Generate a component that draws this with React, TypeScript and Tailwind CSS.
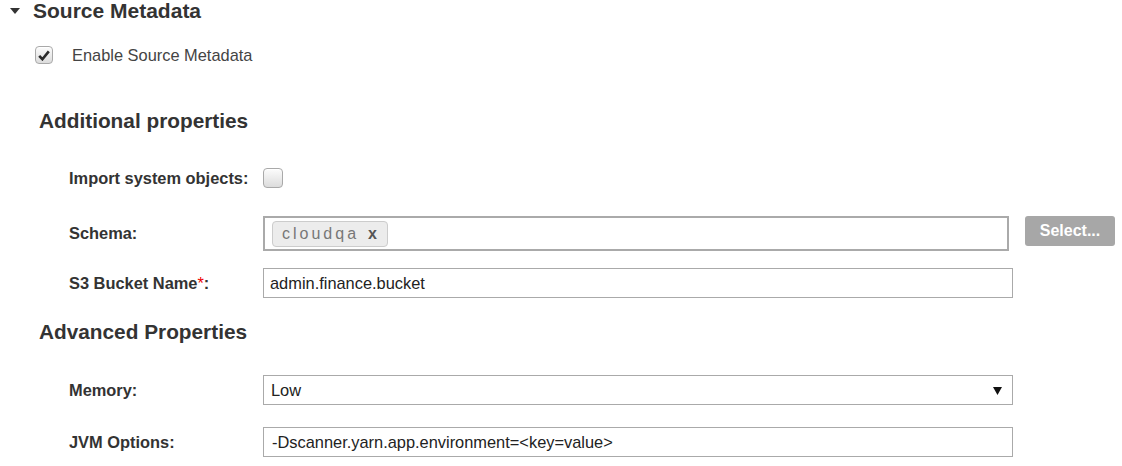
import React from "react";

function CheckBox({ checked, size = 18 }: { checked?: boolean; size?: number }) {
  return (
    <div
      className="rounded-[4px] border border-[#a9a9a9] bg-gradient-to-b from-[#fcfcfc] to-[#dcdcdc] flex items-center justify-center shadow-[inset_0_1px_0_#fff]"
      style={{ width: size, height: size }}
    >
      {checked && (
        <svg width="12" height="11" viewBox="0 0 12 11">
          <path d="M1.2 5.8 L4.4 9.2 L10.8 1.4" fill="none" stroke="#2b2b2b" strokeWidth="2.6" strokeLinejoin="miter" />
        </svg>
      )}
    </div>
  );
}

function Label({ children }: { children: React.ReactNode }) {
  return <div className="w-[194px] shrink-0 text-[16.4px] font-bold text-[#333]">{children}</div>;
}

export default function App() {
  return (
    <div className="w-[1122px] h-[466px] bg-white text-[#333] overflow-hidden" style={{ fontFamily: '"Liberation Sans", Arial, sans-serif' }}>
      <div className="pl-[10px]">
        <div className="h-[22px] flex items-center">
          <svg width="10" height="6" viewBox="0 0 10 6">
            <polygon points="0,0 10,0 5,6" fill="#333" />
          </svg>
          <div className="ml-[13px] text-[21px] font-bold leading-none -mt-[1px]">Source Metadata</div>
        </div>
        <div className="mt-[24px] pl-[25px] flex items-center h-[18px]">
          <CheckBox checked />
          <div className="ml-[19px] text-[16.4px] text-[#444]">Enable Source Metadata</div>
        </div>
        <div className="mt-[46px] pl-[29px] h-[22px] flex items-center text-[20.8px] font-bold">Additional properties</div>
        <div className="pl-[59px]">
          <div className="mt-[36px] h-[20px] flex items-center">
            <Label>Import system objects:</Label>
            <CheckBox size={20} />
          </div>
          <div className="mt-[28px] flex items-center">
            <Label>Schema:</Label>
            <div className="w-[746px] h-[35px] border-2 border-[#aaa] flex items-center pl-[7px]">
              <div className="h-[26px] pl-[9px] pr-[10px] flex items-center rounded-[4px] border border-[#ccc] bg-[#ececec] text-[16px] text-[#777] tracking-[3px]">
                cloudqa<span className="ml-[9px] font-bold text-[#555] tracking-normal">x</span>
              </div>
            </div>
            <div className="ml-[16px] w-[90px] h-[30px] -mt-[6px] rounded-[3px] bg-[#a7a7a7] text-white font-bold text-[16px] flex items-center justify-center">
              Select...
            </div>
          </div>
          <div className="mt-[17px] flex items-center">
            <Label>
              S3 Bucket Name<span className="text-[#e00] font-normal">*</span>:
            </Label>
            <div className="w-[750px] h-[30px] border border-[#aaa] flex items-center pl-[6px] text-[16.4px] text-[#222]">admin.finance.bucket</div>
          </div>
        </div>
        <div className="mt-[23px] pl-[29px] h-[22px] flex items-center text-[20.8px] font-bold">Advanced Properties</div>
        <div className="pl-[59px]">
          <div className="mt-[32px] flex items-center">
            <Label>Memory:</Label>
            <div className="w-[750px] h-[30px] border border-[#aaa] flex items-center justify-between pl-[7px] pr-[10px] text-[16.4px] text-[#222]">
              <span>Low</span>
              <svg width="9" height="9" viewBox="0 0 10 10">
                <polygon points="0,1 10,1 5,10" fill="#111" />
              </svg>
            </div>
          </div>
          <div className="mt-[22px] flex items-center">
            <Label>JVM Options:</Label>
            <div className="w-[750px] h-[30px] border border-[#aaa] flex items-center pl-[8px] text-[16.4px] text-[#222]">-Dscanner.yarn.app.environment=&lt;key=value&gt;</div>
          </div>
        </div>
      </div>
    </div>
  );
}
